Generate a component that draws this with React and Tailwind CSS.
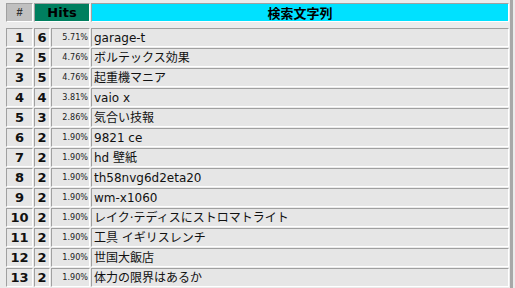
import React from "react";

const rows = [
  [1, 6, "5.71%", "garage-t"],
  [2, 5, "4.76%", "ボルテックス効果"],
  [3, 5, "4.76%", "起重機マニア"],
  [4, 4, "3.81%", "vaio x"],
  [5, 3, "2.86%", "気合い技報"],
  [6, 2, "1.90%", "9821 ce"],
  [7, 2, "1.90%", "hd 壁紙"],
  [8, 2, "1.90%", "th58nvg6d2eta20"],
  [9, 2, "1.90%", "wm-x1060"],
  [10, 2, "1.90%", "レイク·テディスにストロマトライト"],
  [11, 2, "1.90%", "工具 イギリスレンチ"],
  [12, 2, "1.90%", "世国大飯店"],
  [13, 2, "1.90%", "体力の限界はあるか"],
];

// inset look: dark top/left, white bottom/right
const cell =
  "h-[19px] border border-t-[#a0a0a0] border-l-[#a0a0a0] border-b-white border-r-white flex items-center";

export default function App() {
  return (
    <div className="w-[515px] h-[288px] overflow-hidden bg-[#ebebeb] flex">
      <div className="flex-1 pl-[6px] pr-[1px] pt-[3px]">
        <div className="grid grid-cols-[27px_16px_39px_1fr] gap-x-px">
          <div className={`${cell} justify-center bg-[#c0c0c0] text-[11px] font-bold text-[#333] font-['Liberation_Sans',sans-serif]`}>
            #
          </div>
          <div className={`${cell} col-span-2 justify-center bg-[#007f5f] text-[13px] font-bold text-[#000] font-['DejaVu_Sans',sans-serif]`}>
            Hits
          </div>
          <div className={`${cell} justify-center bg-[#00e1ff] text-[13px] font-bold text-black font-['Noto_Sans_CJK_JP',sans-serif]`}>
            検索文字列
          </div>
        </div>

        <div className="mt-[6px] grid grid-cols-[27px_16px_39px_1fr] gap-px">
          {rows.map(([n, hits, pct, text]) => (
            <React.Fragment key={n}>
              <div className={`${cell} justify-center bg-[#e6e6e6] text-[13px] font-bold text-[#111] font-['DejaVu_Sans',sans-serif]`}>
                {n}
              </div>
              <div className={`${cell} justify-center bg-[#e6e6e6] text-[13px] font-bold text-[#111] font-['DejaVu_Sans',sans-serif]`}>
                {hits}
              </div>
              <div className={`${cell} justify-end pr-px bg-[#e6e6e6] text-[9px] text-[#222] font-['DejaVu_Sans_Condensed','DejaVu_Sans',sans-serif]`}>
                {pct}
              </div>
              <div className={`${cell} pl-[2px] bg-[#e6e6e6] text-[12px] text-[#111] whitespace-nowrap font-['DejaVu_Sans','Noto_Sans_CJK_JP',sans-serif]`}>
                {text}
              </div>
            </React.Fragment>
          ))}
        </div>
      </div>
      <div className="w-[3px] bg-[#a8a8a8] mr-[2px]" />
    </div>
  );
}
